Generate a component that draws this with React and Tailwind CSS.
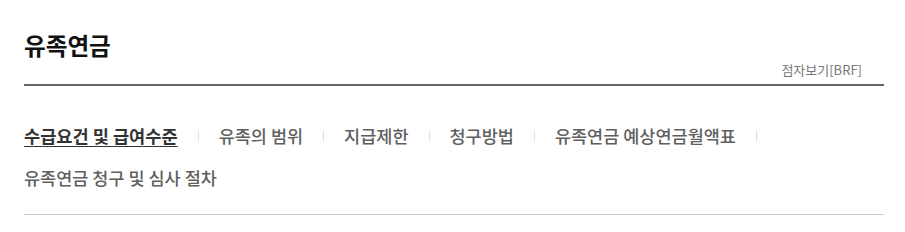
import { Fragment } from 'react';

const tabs = [
  { label: '수급요건 및 급여수준', active: true },
  { label: '유족의 범위' },
  { label: '지급제한' },
  { label: '청구방법' },
  { label: '유족연금 예상연금월액표' },
  { label: '유족연금 청구 및 심사 절차' },
];

export default function App() {
  return (
    <div className="w-[905px] h-[232px] bg-white font-['Noto_Sans_CJK_KR','Noto_Sans',sans-serif]">
      <div className="ml-6 w-[860px]">
        {/* header */}
        <div className="border-b-2 border-[#666] pt-[29px] pb-[5px]">
          <h2 className="text-[23.6px] leading-[32px] font-bold text-[#111]">유족연금</h2>
          <div className="flex justify-end pr-[22px]">
            <a href="#" className="text-[13px] leading-[18px] text-[#777]">점자보기[BRF]</a>
          </div>
        </div>

        {/* tabs */}
        <ul className="mt-[37px] pb-[23px] border-b border-[#ccc] flex flex-wrap items-center gap-y-[16px]">
          {tabs.map((t, i) => (
            <Fragment key={t.label}>
              <li className="flex items-center">
                <a
                  href="#"
                  className={
                    t.active
                      ? 'text-[17.6px] leading-[26px] font-bold text-[#333] underline underline-offset-[3px]'
                      : 'text-[17.5px] leading-[26px] font-medium text-[#5f5f5f]'
                  }
                >
                  {t.label}
                </a>
                {i < tabs.length - 1 && <span className="mx-5 w-px h-[10px] bg-[#ddd]" />}
              </li>
            </Fragment>
          ))}
        </ul>
      </div>
    </div>
  );
}
